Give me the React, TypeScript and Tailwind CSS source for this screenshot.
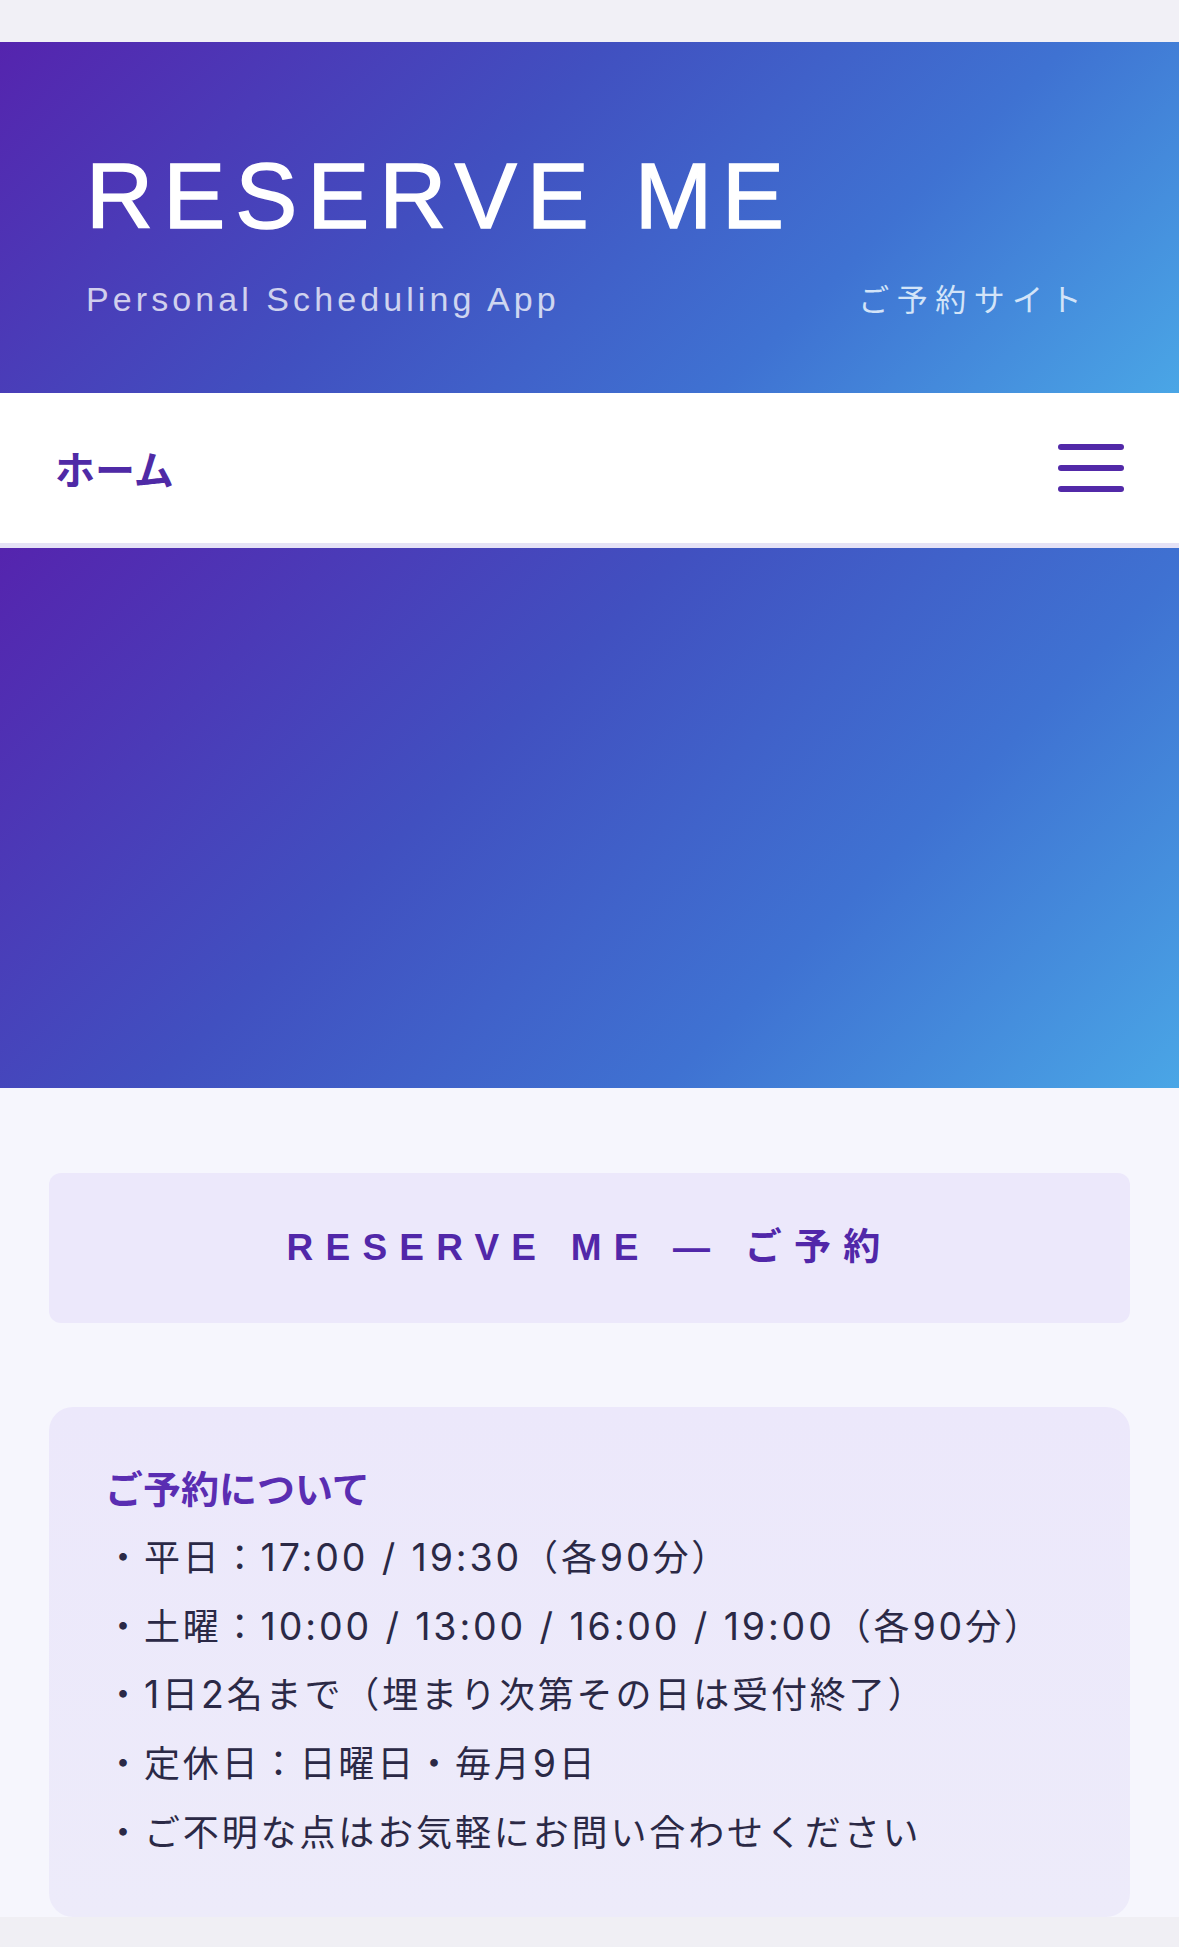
const latin = { fontFamily: '"Liberation Sans", "Noto Sans CJK JP", sans-serif' }
const jp = { fontFamily: '"Noto Sans CJK JP", "Liberation Sans", sans-serif' }
const body = { fontFamily: 'Inter, "Noto Sans CJK JP", sans-serif' }

const rules = [
  '・平日：17:00 / 19:30（各90分）',
  '・土曜：10:00 / 13:00 / 16:00 / 19:00（各90分）',
  '・1日2名まで（埋まり次第その日は受付終了）',
  '・定休日：日曜日・毎月9日',
  '・ご不明な点はお気軽にお問い合わせください',
]

// digits render a touch larger than the kana, like the original
function RuleLine({ text }: { text: string }) {
  const parts = text.split(/([0-9:/ ]+)/)
  return (
    <li>
      {parts.map((p, i) =>
        /^[0-9:/ ]+$/.test(p) ? (
          <span key={i} className="text-[37.5px]">
            {p}
          </span>
        ) : (
          <span key={i}>{p}</span>
        )
      )}
    </li>
  )
}

export default function App() {
  return (
    <div className="w-[1179px] min-h-[1947px] bg-[#f6f6fd] flex flex-col" style={latin}>
      {/* browser chrome strip */}
      <div className="h-[42px] bg-[#f1f0f6]"></div>

      {/* Header */}
      <header className="h-[351px] bg-[linear-gradient(135deg,#5524ae_0%,#4150c0_40%,#3f72d2_70%,#4aa6e6_100%)] pt-[108px] text-white">
        <h1 className="pl-[86px] text-[93px] leading-none tracking-[10px] [-webkit-text-stroke:1.5px_white]">RESERVE ME</h1>
        <div className="mt-[39px] pl-[86px] pr-[90px] flex items-baseline justify-between">
          <p className="text-[34px] leading-none tracking-[0.12em] text-white/75">Personal Scheduling App</p>
          <p className="text-[31px] leading-none tracking-[0.24em] text-[#d3e4f8]" style={jp}>
            ご予約サイト
          </p>
        </div>
      </header>

      {/* Nav */}
      <nav className="h-[155px] bg-white border-b-[5px] border-[#e5e2f6] px-[55px] flex items-center justify-between">
        <span className="text-[40px] font-bold text-[#4f2aa6]" style={jp}>
          ホーム
        </span>
        <button className="w-[66px] h-[48px] flex flex-col justify-between">
          <span className="block h-[6px] w-full rounded-full bg-[#5229a8]"></span>
          <span className="block h-[6px] w-full rounded-full bg-[#5229a8]"></span>
          <span className="block h-[6px] w-full rounded-full bg-[#5229a8]"></span>
        </button>
      </nav>

      {/* Hero */}
      <section className="h-[540px] bg-[linear-gradient(135deg,#5524ae_0%,#4150c0_40%,#3f72d2_70%,#4aa6e6_100%)]"></section>

      {/* Content */}
      <main className="flex-1 px-[49px] pt-[85px] flex flex-col gap-[84px]">
        <div className="h-[150px] rounded-[12px] bg-[#ece8fb] flex items-center justify-center">
          <h2 className="text-[37px] font-bold tracking-[0.33em] text-[#5127a9]">RESERVE ME — ご予約</h2>
        </div>

        <div className="rounded-[24px] bg-[linear-gradient(180deg,#ece8fb,#edebfa)] pl-[56px] pr-[40px] pt-[53px] pb-[49px]" style={jp}>
          <h3 className="text-[38px] leading-[54px] font-bold text-[#5a2db2]">ご予約について</h3>
          <ul className="mt-[10px] text-[36px] leading-[68.7px] tracking-[0.08em] text-[#2b2946]" style={body}>
            {rules.map((r) => (
              <RuleLine key={r} text={r} />
            ))}
          </ul>
        </div>
      </main>

      <div className="h-[30px] bg-[#f0eff4]"></div>
    </div>
  )
}
